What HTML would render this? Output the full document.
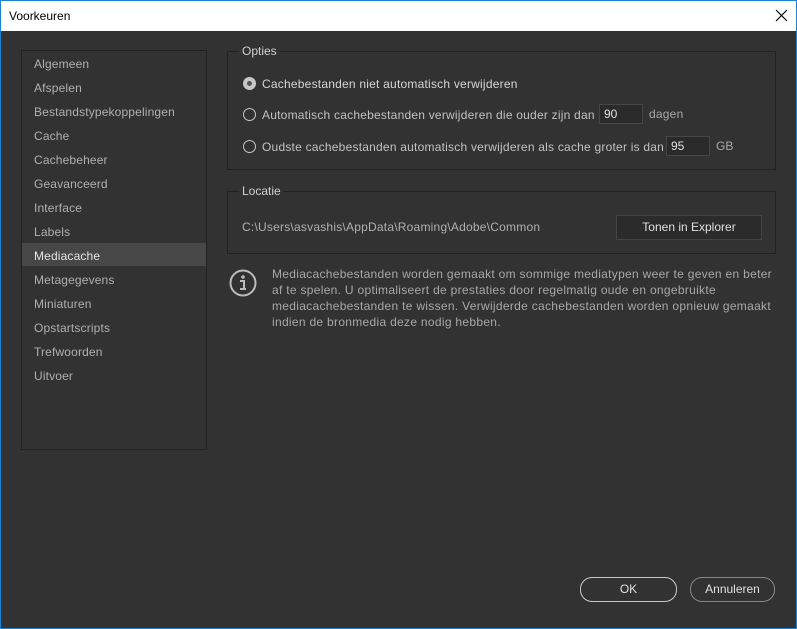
<!DOCTYPE html>
<html><head><meta charset="utf-8"><style>
*{margin:0;padding:0;box-sizing:border-box}
body{width:797px;height:629px;overflow:hidden;background:#323232;font-family:"Liberation Sans",sans-serif;font-size:12px;color:#c2c2c2;position:relative}
.a{position:absolute;white-space:nowrap}
.ls{letter-spacing:0.22px}
#win{position:absolute;left:0;top:0;width:797px;height:629px;border:1px solid #1883d7}
#title{position:absolute;left:1px;top:1px;width:795px;height:30px;background:#fff;color:#000}
.side{position:absolute;left:21px;top:50px;width:186px;height:400px;border:1px solid #222;}
.it{position:absolute;left:12px;color:#b0b0b0;letter-spacing:0.15px}
.grp{position:absolute;border:1px solid #222}
.lg{position:absolute;background:#323232;padding:0 3px;color:#d0d0d0}
.rad{position:absolute;width:13px;height:13px;border:1px solid #c8c8c8;border-radius:50%}
.inp{position:absolute;height:20px;width:44px;background:#2a2a2a;border:1px solid #464646;color:#e0e0e0;padding:2px 4px}
.btn{position:absolute;border-radius:12px;text-align:center;color:#e0e0e0}
</style></head><body>
<div id="win"></div>
<div id="title"><span class="a" style="left:8px;top:8px;color:#000">Voorkeuren</span>
<svg class="a" style="left:774px;top:8px" width="13" height="13"><path d="M1 1L12 12M12 1L1 12" stroke="#000" stroke-width="1.2"/></svg></div>

<div class="side">
<div style="position:absolute;left:0;top:192px;width:184px;height:23px;background:#474747"></div>
<span class="it a" style="top:6px">Algemeen</span>
<span class="it a" style="top:30px">Afspelen</span>
<span class="it a" style="top:54px">Bestandstypekoppelingen</span>
<span class="it a" style="top:78px">Cache</span>
<span class="it a" style="top:102px">Cachebeheer</span>
<span class="it a" style="top:126px">Geavanceerd</span>
<span class="it a" style="top:150px">Interface</span>
<span class="it a" style="top:174px">Labels</span>
<span class="it a" style="top:198px;color:#e6e6e6">Mediacache</span>
<span class="it a" style="top:222px">Metagegevens</span>
<span class="it a" style="top:246px">Miniaturen</span>
<span class="it a" style="top:270px">Opstartscripts</span>
<span class="it a" style="top:294px">Trefwoorden</span>
<span class="it a" style="top:318px">Uitvoer</span>
</div>

<div class="grp" style="left:227px;top:51px;width:549px;height:119px"></div>
<span class="lg a" style="left:239px;top:44px">Opties</span>
<div class="rad" style="left:243px;top:77px;background:#c8c8c8"><div style="position:absolute;left:3px;top:3px;width:5px;height:5px;border-radius:50%;background:#555"></div></div>
<span class="a ls" style="left:262px;top:77px;color:#d6d6d6">Cachebestanden niet automatisch verwijderen</span>
<div class="rad" style="left:243px;top:108px"></div>
<span class="a ls" style="left:262px;top:108px">Automatisch cachebestanden verwijderen die ouder zijn dan</span>
<div class="inp" style="left:599px;top:104px">90</div>
<span class="a ls" style="left:649px;top:107px;color:#a8a8a8">dagen</span>
<div class="rad" style="left:243px;top:140px"></div>
<span class="a ls" style="left:262px;top:140px">Oudste cachebestanden automatisch verwijderen als cache groter is dan</span>
<div class="inp" style="left:666px;top:136px">95</div>
<span class="a" style="left:716px;top:139px;color:#a8a8a8">GB</span>

<div class="grp" style="left:227px;top:191px;width:549px;height:63px"></div>
<span class="lg a" style="left:239px;top:184px">Locatie</span>
<span class="a ls" style="left:242px;top:220px;color:#b0b0b0">C:\Users\asvashis\AppData\Roaming\Adobe\Common</span>
<div class="a" style="left:616px;top:215px;width:146px;height:25px;background:#2b2b2b;border:1px solid #444;text-align:center;line-height:23px;color:#e0e0e0">Tonen in Explorer</div>

<svg class="a" style="left:228px;top:268px" width="30" height="30"><circle cx="15" cy="15" r="12.5" fill="none" stroke="#bbb" stroke-width="2"/><circle cx="15" cy="9" r="1.8" fill="#bbb"/><path d="M12 13h4v7M12 21h6" stroke="#bbb" stroke-width="2" fill="none"/></svg>
<div class="a" style="left:272px;top:266px;line-height:16px;color:#a8a8a8;white-space:nowrap;letter-spacing:0.3px">Mediacachebestanden worden gemaakt om sommige mediatypen weer te geven en beter<br>af te spelen. U optimaliseert de prestaties door regelmatig oude en ongebruikte<br>mediacachebestanden te wissen. Verwijderde cachebestanden worden opnieuw gemaakt<br>indien de bronmedia deze nodig hebben.</div>

<div class="btn" style="left:580px;top:577px;width:97px;height:25px;border:1px solid #ccc;line-height:23px">OK</div>
<div class="btn" style="left:690px;top:577px;width:85px;height:25px;border:1px solid #888;line-height:23px">Annuleren</div>
</body></html>
